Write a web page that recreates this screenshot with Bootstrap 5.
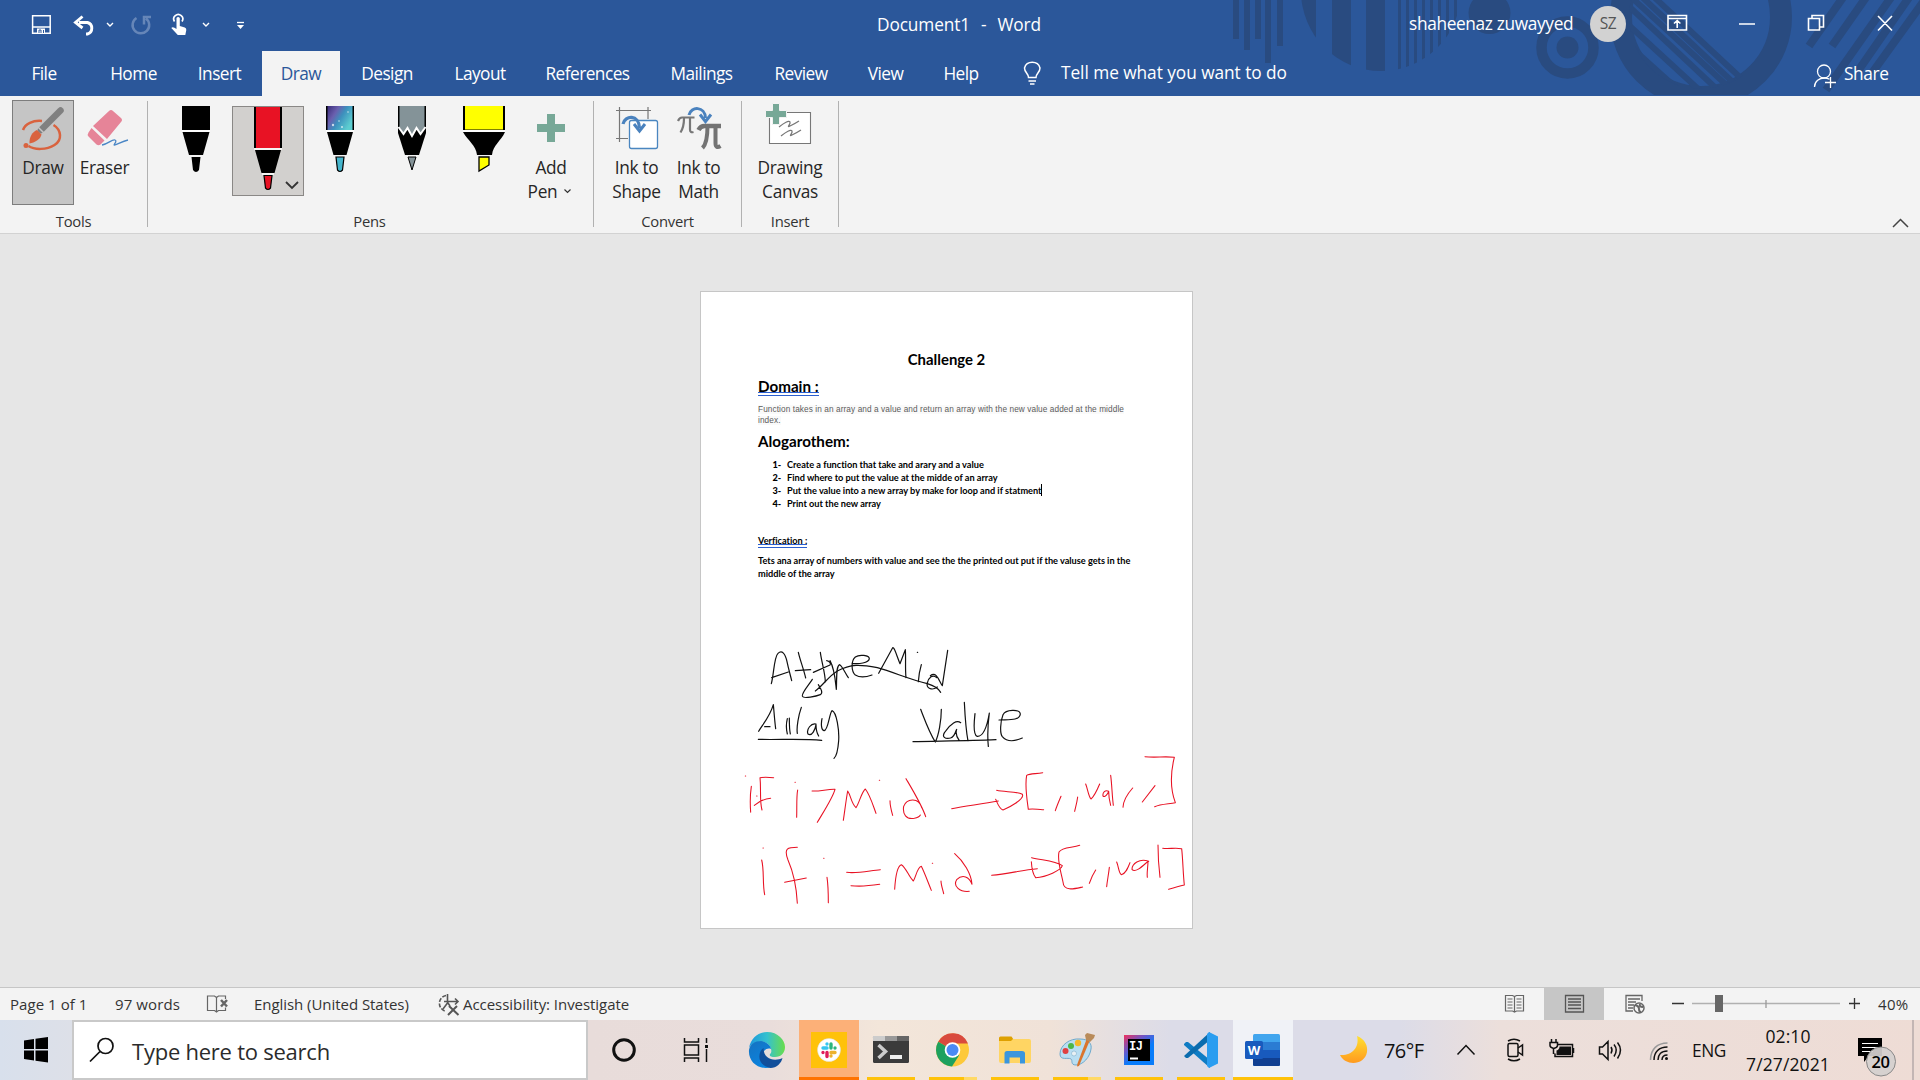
<!DOCTYPE html>
<html lang="en">
<head>
<meta charset="utf-8">
<title>Document1 - Word</title>
<link href="https://cdn.jsdelivr.net/npm/bootstrap@5.3.0/dist/css/bootstrap.min.css" rel="stylesheet">
<style>
body{width:1920px;height:1080px;overflow:hidden;font-family:"Open Sans","Noto Sans",sans-serif;font-size:17.3px;letter-spacing:-.55px;line-height:24px;color:#262626;background:#e6e6e6}
svg{display:block;flex:none;overflow:visible}
.app-head{height:96px;background:#2b579a;color:#fff}
.head-art{left:1220px;top:0}
.title-row{height:48px}
.win-title{white-space:pre;margin-left:617px;width:200px;padding-top:1px;letter-spacing:-.12px;word-spacing:1.1px}
.tab-row{height:45px;margin-top:3px}
.tab-item{flex:none;height:45px;line-height:45px;text-align:center;color:#fff}
.tab-item.on{background:#f3f3f3;color:#2b579a}
.tell-me{line-height:43px;letter-spacing:-.05px}
.avatar{width:36px;height:36px;background:#d2d2d2;color:#555;font-size:15.5px;line-height:35px;text-align:center}
.ribbon{height:138px;background:#f3f3f3;border-bottom:1px solid #d2d2d2}
.rgroup{height:137px;padding-top:4px}
.rbody{height:111px}
.rlabel{font-size:14.8px;line-height:20px;letter-spacing:-.25px;text-align:center;color:#333}
.rsep{width:1px;height:126px;margin-top:5px;background:#b1b1b1}
.tool{height:105px;text-align:center;border:1px solid transparent;letter-spacing:-.3px}
.tool svg{margin-bottom:1px}
.tool.on{background:#c5c5c5;border-color:#7d7d7d}
.pen-cell{width:72px;height:90px;margin-top:6px}
.pen-cell.on{background:#d2d0ce;border:1px solid #8a8886}
.workspace{height:753px;padding-top:57px}
.sheet{width:493px;height:638px;margin-left:700px;background:#fff;border:1px solid #c6c6c6;padding:0 57px;font-family:Lato,sans-serif;color:#000;font-weight:700;letter-spacing:0}
.sheet p,.sheet ol{margin:0;padding:0;white-space:nowrap}
.doc-title{font-size:14.9px;line-height:20px;padding-top:57px!important;height:78px;text-align:center}
.doc-head{font-size:15.2px;line-height:20px}
.dbl{display:inline-block;position:relative}
.dbl::after{content:"";position:absolute;left:0;right:0;top:16px;height:4px;background:#fff;border:solid #2b5fd0;border-width:1px 0}
.doc-body .dbl::after{top:10px}
.doc-quote{font:8.25px/11px "Liberation Sans",sans-serif;letter-spacing:.09px;color:#5c5c5c}
.doc-quote span{background:#fafafa}
.doc-body{font-size:9.2px;line-height:13px;letter-spacing:-.015px}
.doc-body li{list-style:none;display:flex}
.doc-body li b{width:14.5px}
.caret-bar{width:1px;height:12px;background:#000}
.ink{left:29px;top:328px}
.statusbar{height:33px;background:#f3f3f3;border-top:1px solid #c6c6c6;font-size:15px;letter-spacing:-.05px;line-height:32px;color:#333;white-space:nowrap}
.view-btn{width:60px;height:32px}
.view-btn.on{background:#c6c6c6}
.taskbar{height:60px;color:#111;background:linear-gradient(90deg,#d8e0ec 0,#dde0e8 72px,#e8dcda 590px,#e9dddb 770px,#f3e6da 880px,#f0e2d8 1050px,#dcdce8 1170px,#dcdce8 1400px,#ecdfdb 1500px,#eedcd5 100%)}
.searchbox{width:516px;height:60px;background:#fff;border:2px solid #c9c9c9;font-size:22px;letter-spacing:-.24px;color:#2b2b2b}
.app-btn{width:62px;height:60px;position:relative}
.app-btn.run::after{content:"";position:absolute;left:7px;width:48px;bottom:0;height:3px;background:#ffc20a}
.app-btn.two::after{background:linear-gradient(90deg,#ffc20a 35px,#ffd966 35px)}
.app-btn.slack{background:linear-gradient(#fcb078,#fcb078) 1px 0/60px 60px no-repeat}
.app-btn.slack::after{left:1px;width:60px;background:#ff7300}
.app-btn.word{background:linear-gradient(#f0f2f7,#f0f2f7) 1px 0/60px 60px no-repeat}
.app-btn.word::after{left:1px;width:60px}
.temp{width:65px;font-size:20px;letter-spacing:-.6px}
.clock{width:110px;font-size:17.5px;letter-spacing:.1px;line-height:28px;text-align:center}
</style>
<script src="https://cdn.jsdelivr.net/npm/bootstrap@5.3.0/dist/js/bootstrap.bundle.min.js"></script>
</head>
<body class="d-flex flex-column">
<header class="app-head position-relative flex-shrink-0">
  <svg class="head-art position-absolute" width="700" height="95" viewBox="1220 0 700 95" fill="#294b80" style="overflow:hidden">
    <defs><clipPath id="c1"><circle cx="1381" cy="-9" r="80"/></clipPath><clipPath id="c2"><circle cx="1701" cy="17" r="72"/></clipPath></defs>
    <path d="M1233 0h6v39h-6zM1244 0h6v50h-6zM1255 0h6v39h-6zM1265 0h6v63h-6zM1277 0h6v46h-6z"/>
    <path clip-path="url(#c1)" d="M1290 0h26v80h-26zM1332 0h19v80h-19zM1366 0h19v80h-19zM1398 0h3v80h-3zM1406 0h3v80h-3zM1414 0h3v80h-3zM1422 0h3v80h-3zM1430 0h3v80h-3zM1438 0h3v80h-3zM1446 0h3v80h-3zM1454 0h3v80h-3z"/>
    <circle cx="1489.500" cy="13" r="21"/><circle cx="1567.500" cy="47.500" r="26" fill="none" stroke="#294b80" stroke-width="10.500"/><circle cx="1567.500" cy="47.500" r="11"/>
    <circle cx="1701" cy="17" r="80" fill="none" stroke="#294b80" stroke-width="22"/>
    <g clip-path="url(#c2)" fill="none" stroke="#294b80" stroke-width="6"><path d="M1654-3l90 84M1642-3l96 90M1630-4l104 96M1618-4l104 98M1608 6l100 92M1610 28l84 76" /></g>
    <g fill="none" stroke="#294b80" stroke-width="8"><path d="M1844-4l-35 50M1867-4l-35 50M1892-4l-66 94M1910-4l-52 75M1926-2l-54 75"/></g>
  </svg>
  <div class="title-row d-flex align-items-center position-relative">
    <svg width="260" height="48" viewBox="0 0 260 48" fill="none" stroke="#fff" stroke-width="1.500">
      <path d="M32.600 15.800h17.600v17.400h-17.600z"/><path d="M33 27h17"/><path d="M37 33v-4.500h8v4.500" fill="#fff" stroke="none"/><path d="M39 33v-3h2v3M43.500 33v-3" stroke="#2b579a" stroke-width="1"/>
      <path d="M79 22.500h8.500a6 6 0 0 1 0 11.500h-1.500" stroke-width="2.900"/><path d="M82.500 16.500l-7 6 7 5.500" stroke-width="2.900"/>
      <path d="M107 23l3 3 3-3M203 23l3 3 3-3" stroke-width="1.400"/>
      <g stroke="#6686b8" stroke-width="2.500"><path d="M136.500 18a8.300 8.300 0 1 0 9.500 0.500M144 24.500v-7.500h7"/></g>
      <path d="M174.500 21.500a4.500 4.500 0 1 1 7.500 0" stroke-width="1.700"/><path d="M176.500 18q1.500-2 3.300 0v8l5 1.500q1.700.6 1.500 2.500l-1 5h-7.500l-6.500-7q1.500-2 5.200 1z" fill="#fff" stroke="none"/>
      <path d="M237 22.500h7" stroke-width="1.300"/><path d="M237 25h7l-3.500 4z" fill="#fff" stroke="none"/>
    </svg>
    <div class="win-title">Document1  -  Word</div>
    <div style="margin-left:332px;width:181px;letter-spacing:-.35px">shaheenaz zuwayyed</div>
    <div class="avatar rounded-circle">SZ</div>
    <svg width="294" height="48" viewBox="1626 0 294 48" fill="none" stroke="#fff" stroke-width="1.600">
      <path d="M1668 15.500h18.500v14.500h-18.500zM1668 18.500h18.500M1677.200 28v-7M1674 23.500l3.200-3 3.200 3M1739 24h16M1808.500 18.500h11v11.500h-11zM1812 18v-2.500h11.500v11.500h-3.500M1878 16l14 14.500M1892 16l-14 14.500"/>
    </svg>
  </div>
  <nav class="tab-row d-flex position-relative">
    <div class="tab-item" style="width:88px">File</div><div class="tab-item" style="width:91px">Home</div><div class="tab-item" style="width:81px">Insert</div><div class="tab-item on" style="width:78px;margin-left:2px">Draw</div><div class="tab-item" style="width:94px">Design</div><div class="tab-item" style="width:92px">Layout</div><div class="tab-item" style="width:123px">References</div><div class="tab-item" style="width:105px">Mailings</div><div class="tab-item" style="width:94px">Review</div><div class="tab-item" style="width:75px">View</div><div class="tab-item" style="width:76px">Help</div>
    <svg width="62" height="45" viewBox="999 51 62 45" fill="none" stroke="#fff" stroke-width="1.500"><path d="M1028.500 77.500c0-4-4-5-4-9.500a8 7.500 0 0 1 15.500 0c0 4.500-4 5.500-4 9.500zM1028.500 81h7.500M1030 84h4.500"/></svg>
    <div class="tab-item tell-me text-start" style="width:752px">Tell me what you want to do</div>
    <svg width="31" height="45" viewBox="1813 51 31 45" fill="none" stroke="#fff" stroke-width="1.300"><circle cx="1824" cy="71.500" r="6.500"/><path d="M1814.500 87c0-6 5-9 10-9 2 0 3.500.5 5 1.300M1825 82.500h11M1830.500 77v11"/></svg>
    <div class="tab-item" style="letter-spacing:-.4px">Share</div>
  </nav>
</header>

<section class="ribbon d-flex flex-shrink-0">
  <div class="rgroup" style="width:147px">
    <div class="rbody d-flex ps-2">
      <div class="tool on" style="width:62px;margin-left:4px">
        <svg width="60" height="54" viewBox="13 101 60 54" fill="none"><path d="M23 130c2-6 10-10 19-9M53.500 125c8 5 9 15 1 20-8 5-20 5-26 1" stroke="#d9633f" stroke-width="2.500"/><path d="M60.500 110.500L41 130" stroke="#808080" stroke-width="6.500" stroke-linecap="round"/><path d="M37 130l4.500 4.500c-1 5-7 8-12 9-.5-6 3-12 7.500-13.500z" fill="#d9633f"/><path d="M38 127l6.500 6.500" stroke="#c5c5c5" stroke-width="1.500"/><circle cx="26" cy="145.500" r="2.500" fill="#d9633f"/></svg>
        Draw</div>
      <div class="tool" style="width:61px">
        <svg width="59" height="54" viewBox="75 101 59 54"><path d="M109 111q2-2 4 0l8 7q2 2 0 4l-14 17-14-13z" fill="#e68498"/><path d="M91.500 128l13 12.500-4 4q-2 1.500-4 0l-8-8q-1.500-2 0-4z" fill="#e68498"/><path d="M102 145c6-1 10-6 13-5s-3 6 0 5 8-4 13-5" fill="none" stroke="#4a86c5" stroke-width="1.300"/></svg>
        Eraser</div>
    </div>
    <div class="rlabel">Tools</div>
  </div>
  <div class="rsep"></div>
  <div class="rgroup" style="width:445px">
    <div class="rbody d-flex" style="padding-left:12px">
      <div class="pen-cell"><svg width="72" height="90" viewBox="160 106 72 90"><path d="M182 106h28v24h-28zM182.500 132h27l-6.500 23h-14zM191.500 157h9l-1.500 13q-3 4-6 0z"/><path d="M182 131h28" stroke="#fff" stroke-width="1.500"/></svg></div>
      <div class="pen-cell on"><svg width="70" height="88" viewBox="233 107 70 88"><path d="M254 107h28v41h-28zM255 150h26l-6.500 23h-13z"/><path d="M256 107h24v41h-24z" fill="#e81224"/><path d="M254 149h28M262 174h12" stroke="#fff" stroke-width="1.500"/><path d="M264 175.500h8l-1.500 12.500q-2.500 3-5 0z" fill="#e81224" stroke="#000" stroke-width="1.200"/><path d="M286 182l6 6 6-6" fill="none" stroke="#333" stroke-width="1.800"/></svg></div>
      <div class="pen-cell"><svg width="72" height="90" viewBox="304 106 72 90"><defs><linearGradient id="gal" x2="1" y2=".6"><stop stop-color="#3a2b78"/><stop offset=".35" stop-color="#6a5fae"/><stop offset=".6" stop-color="#3d90bd"/><stop offset="1" stop-color="#5ccdd0"/></linearGradient></defs><path d="M326 106h28v24h-28zM327 132h26l-6.500 23h-13z"/><path d="M327.500 106h25v24h-25z" fill="url(#gal)"/><path d="M326 131h28" stroke="#fff" stroke-width="1.500"/><g fill="#fff" opacity=".7"><circle cx="333" cy="125" r="1.200"/><circle cx="339" cy="121" r=".8"/><circle cx="342" cy="127" r="1"/><circle cx="348" cy="112" r=".8"/></g><path d="M336 157h8l-1.500 13q-2.500 3-5 0z" fill="#45b5cc" stroke="#000" stroke-width="1.200"/></svg></div>
      <div class="pen-cell"><svg width="72" height="90" viewBox="376 106 72 90"><path d="M398 106h28v27l-7 22h-14l-7-22z"/><path d="M399.500 106h25v21l-3.500 6-5-5-4 7-4-7-5 5-3.500-6z" fill="#849398"/><path d="M398.500 127l5 7 4-6 4.500 8 4.500-8 4 6 5-7" fill="none" stroke="#fff" stroke-width="2"/><path d="M408 157h8l-4 13z" fill="#849398" stroke="#000"/></svg></div>
      <div class="pen-cell"><svg width="72" height="90" viewBox="448 106 72 90"><path d="M463 106h42v24h-42zM463 132h42c-4 9-12 13-13 23h-15c-1-10-9-14-14-23z"/><path d="M465 106h38v23.500h-38z" fill="#ff0"/><path d="M463 131h42" stroke="#fff" stroke-width="1.500"/><path d="M479 157h10v8l-10 6z" fill="#ff0" stroke="#000" stroke-width="1.300"/></svg></div>
      <div class="tool" style="width:62px"><svg width="60" height="54" viewBox="521 101 60 54"><path d="M547 114h8v10h10v8h-10v10h-8v-10h-10v-8h10z" fill="#77a897"/></svg>Add<div class="d-flex justify-content-center align-items-center" style="gap:7px;margin-left:-3px">Pen<svg width="7" height="5" fill="none" stroke="#333" stroke-width="1.200"><path d="M.5.5l3 3 3-3"/></svg></div></div>
    </div>
    <div class="rlabel" style="width:443px">Pens</div>
  </div>
  <div class="rsep"></div>
  <div class="rgroup" style="width:147px">
    <div class="rbody d-flex" style="padding-left:11px">
      <div class="tool" style="width:63px"><svg width="61" height="54" viewBox="606 101 61 54" fill="none"><path d="M616 110.500h35M619.500 107v35M616 138.500h12M648 107v12" stroke="#777" stroke-width="1.200"/><rect x="629.500" y="120.500" width="28" height="28" rx="2" fill="#fff" stroke="#4a86c0" stroke-width="1.300"/><path d="M623 124c2-9 16-10 16.500 4" stroke="#4a82be" stroke-width="3.200"/><path d="M634 124l5.500 7 5.500-7" stroke="#4a82be" stroke-width="3"/></svg>Ink to<br>Shape</div>
      <div class="tool" style="width:61px"><svg width="59" height="54" viewBox="669 101 59 54" fill="none"><path d="M678 121q1.500-3.500 4-3.500h12.500M684 118.500c0 6-1 10-3.500 14M690 118.500v11q0 3.500 3.500 2.500" stroke="#777" stroke-width="2.200"/><path d="M698.500 130q2-4 6-4h16.500" stroke="#737373" stroke-width="4.500"/><path d="M707.500 126c0 10-1 18-5 22M715.500 126v17q0 6 5 3" stroke="#737373" stroke-width="4"/><path d="M689 115c2-9 16-9 16.500 3" stroke="#4a82be" stroke-width="3"/><path d="M700 114.500l5.500 7 5.500-7" stroke="#4a82be" stroke-width="3"/></svg>Ink to<br>Math</div>
    </div>
    <div class="rlabel">Convert</div>
  </div>
  <div class="rsep"></div>
  <div class="rgroup" style="width:96px">
    <div class="rbody"><div class="tool"><svg width="94" height="54" viewBox="743 101 94 54" fill="none"><path d="M769.500 112.500h41v31h-41z" fill="#fff" stroke="#777" stroke-width="1.100"/><path d="M779 127c5-4 10-7 11-5s-4 6 0 4 6-3 9-5M781 136c5-4 10-7 11-5s-4 6 0 4 6-3 9-5" stroke="#777" stroke-width="1.300"/><path d="M772.500 103.500h7v7h7v7h-7v7h-7v-7h-7v-7h7z" fill="#77a897" stroke="#f3f3f3"/></svg>Drawing<br>Canvas</div></div>
    <div class="rlabel">Insert</div>
  </div>
  <div class="rsep"></div>
  <svg class="ms-auto align-self-end" width="30" height="20" viewBox="1890 213 30 20" fill="none" stroke="#444" stroke-width="1.500"><path d="M1893 227l7.500-7.500 7.500 7.500"/></svg>
</section>

<main class="workspace flex-shrink-0">
  <article class="sheet position-relative">
    <p class="doc-title">Challenge 2</p>
    <p class="doc-head" style="padding-top:6px;height:34px"><span class="dbl">Domain :</span></p>
    <p class="doc-quote"><span>Function takes in an array and a value and return an array with the new value added at the middle</span><br><span>index.</span></p>
    <p class="doc-head" style="padding-top:5px;height:32px">Alogarothem:</p>
    <ol class="doc-body" style="padding-left:14.500px">
      <li><b>1-</b>Create a function that take and arary and a value</li>
      <li><b>2-</b>Find where to put the value at the midde of an array</li>
      <li><b>3-</b>Put the value into a new array by make for loop and if statment<i class="caret-bar"></i></li>
      <li><b>4-</b>Print out the new array</li>
    </ol>
    <p class="doc-body" style="padding-top:24px;height:44px"><span class="dbl">Verfication :</span></p>
    <p class="doc-body">Tets ana array of numbers with value and see the the printed out put if the valuse gets in the<br>middle of the array</p>
    <svg class="ink position-absolute" width="470" height="320" viewBox="0 0 1410 960" fill="none" stroke-linecap="round" stroke-linejoin="round" stroke-width="3.600">
      <g stroke="#111">
        <path d="M124 191c8-30 8-80 20-91s22 1 27 25 10 40 14 57M125 173l50-17"/>
        <path d="M205 97c6 26 16 50 22 77M196 152l46-3M271 97c4 30 14 60 15 88M250 157l50-22c4-4-2-12-10-13M300 122c14 25 16 60 19 86 2-30-2-70 10-74 8 4 18 28 26 39M366 130c20 2 50 0 52-14 0-10-30-14-42-5-14 12-12 44 0 54 14 9 34 6 50 0"/>
        <path d="M446 160l42-77c5-3 14 30 22 48l16-42c2 30-1 56 2 84M562 97h1M574 134c-5 17-8 34-9 51"/>
        <path d="M620 173c-12-12-24 0-28 16s14 24 30 12M653 91l-16 106c-8-8-16-46-36-30"/>
        <path d="M632 217c-8-14-20-20-40-26-50-12-100-34-150-48-50-10-80-12-120 10-24 14-44 44-66 60M247 178c-10 16-32 40-30 50s44 0 54-4c10-6 0-20-6-30"/>
        <path d="M86 334c10-18 34-44 44-80 2 20 4 50 7 72M104 320h16M172 296c-4 16-4 30 0 46M178 294c0 14 0 34 3 48M214 262c-8 22-15 60-12 78M258 312c-14-4-30 16-24 30 12 8 22-14 24-28 0 12 2 24 8 34M276 296c-3 14-3 34 6 36 12 2 16-52 24-60 14 4 22 60 20 90-2 26-6 46-14 53M85 358c60 2 130-3 190 3"/>
        <path d="M572 268c14 36 26 70 44 98 10-20 18-64 18-98M692 308c-12-10-30 4-44 24-18 20 0 26 14 22 14-4 16-26 18-26-4 12 2 26 8 34M703 247c2 40 4 80 11 116M735 281c-2 20-8 60 6 68 22 2 32-40 37-70-4 30-6 70-3 100M807 300c24-2 62 4 64-18-2-16-44-14-52 2-8 20-10 56-2 66 14 16 38 14 60 4M549 365c60-2 160-2 249-6"/>
      </g>
      <g stroke="#e81224" stroke-width="3.200">
        <path d="M46 468h1M64 499c-4 26-4 50-2 78M96 570c-8-30-2-60-6-97 12-2 28-1 41 0M73 556c12-10 32-20 49-21M80 528h1M195 487h1M203 510c-4 20-2 52-3 82M246 513c20 2 48-6 69-5-6 24-36 70-53 99M340 601c4-26 8-60 13-88 10 14 10 36 25 50 10-14 16-46 28-56 14 18 22 46 32 73M448 481h1M480 542c0 12 4 30 8 44M528 476c20 34 48 80 59 114M575 563c-8-30-44-30-54-4-4 24 8 40 32 36 10-2 16-6 18-10M665 566c44-8 90-14 140-23M800 511c24 6 60 2 77 12 8 14-40 40-58 47-12-4-16-20-22-32M938 458c-20 4-38 2-48 8-6 30 0 66 5 102 16-4 30 2 46 1M993 529c-6 14-12 28-17 43M1043 531c-2 16-6 30-9 43M1067 492c6 14 8 36 16 45 10-8 18-26 26-45M1136 514c-10-6-19 4-17 14 6 6 14-6 17-14 0 14 2 28 6 42M1142 466c4 30 4 60 8 90M1208 504c-16 18-28 34-29 58M1275 497l-38 49M1245 410c30 4 60-2 88 2-10 40-14 90 3 136-20 4-44 4-62 12"/>
        <path d="M99 684h1M95 720c8 30 2 70 9 104M202 682c-28 0-42 2-28 38 22 50 26 90 28 130M164 787l65-13M281 715h1M291 772c4 26 4 50 4 76M350 757c34 4 68-5 101-8M363 797c30 4 60 0 86-4M494 808c2-34 8-70 20-74 14 8 22 36 36 49 8-12 12-42 24-44 10 20 20 48 30 72M607 730h1M633 783c0 12 6 28 8 38M674 701c26 22 50 60 52 92-8-22-28-32-46-14-12 20 10 38 38 35M785 766c50-4 90-16 137-20M905 713c30 8 70 8 92 24-4 14-48 34-80 36-8-10-12-32-13-48M1049 676c-22 8-52 4-62 20-6 26 6 60 12 90 2 30 36 20 59 15M1097 750c-8 12-14 26-19 40M1138 742c-2 20-6 38-8 58M1160 726c6 14 6 32 14 38 14-4 20-20 26-36M1256 724c-28-10-50 8-50 24 10 14 38-16 48-24 0 16-4 34-2 48M1284 675c0 34 2 64 6 97M1298 685c20 2 38-2 57 1 4 36 4 74 8 109-16 4-30 8-47 13"/>
      </g>
    </svg>
  </article>
</main>

<footer class="statusbar d-flex flex-shrink-0">
  <div style="width:105px;padding-left:10px;letter-spacing:.05px">Page 1 of 1</div><div style="width:92px;padding-left:10px;letter-spacing:.1px">97 words</div>
  <svg width="57" height="32" viewBox="197 988 57 32" fill="none" stroke="#666" stroke-width="1.200"><path d="M216.500 997.500l-2-1.500h-7v14.500h7l2 1.500 2-1.500h7v-3M216.500 997v15M216.500 997.500l2-1.500h7v3"/><path d="M221 1000l6 6.500M227 1000l-6 6.500" stroke-width="2.500"/></svg>
  <div style="width:183px">English (United States)</div>
  <svg width="26" height="32" viewBox="437 988 26 32" fill="none" stroke="#555" stroke-width="1.600"><path d="M446 995.500a8 8 0 0 0-1 15.500" stroke-dasharray="4 1.500"/><path d="M447.500 994v9l-4.500 6M444 1001.500h14M455 998.500l3 3-3 3M448 1003l2 3"/><path d="M449 1006l9.500 9M457 1006l-9 9" stroke-width="2"/></svg>
  <div>Accessibility: Investigate</div>
  <div class="ms-auto d-flex" style="width:436px">
    <div class="view-btn"><svg width="60" height="32" viewBox="1484 988 60 32" fill="none" stroke="#666" stroke-width="1.200"><path d="M1514.500 996.500l-2-1h-7v15.500h7l2 1 2-1h7v-15.500h-7zM1514.500 996v16M1507.500 999h5M1507.500 1002h5M1507.500 1005h5M1507.500 1008h5M1516.500 999h5M1516.500 1002h5M1516.500 1005h5M1516.500 1008h5"/></svg></div>
    <div class="view-btn on"><svg width="60" height="32" viewBox="1544 988 60 32" fill="none" stroke="#555" stroke-width="1.300"><path d="M1565.500 995.500h18v16.500h-18zM1568 999h13M1568 1002h13M1568 1005h13M1568 1008.500h13"/></svg></div>
    <svg width="274" height="32" viewBox="1604 988 274 32" fill="none" stroke="#666" stroke-width="1.300"><path d="M1642 1001v-5.500h-16v15.500h7M1628 999h12M1628 1002h8M1628 1005h6M1628 1008h5"/><circle cx="1639" cy="1008" r="5" stroke-width="1.500"/><path d="M1635 1005q4 1 4 4t2 3M1640 1004q-1 3 3 3" stroke-width="2"/><path d="M1672 1003.500h12M1849 1003.500h11M1854.500 998v11" stroke="#333"/><path d="M1692 1003.500h148" stroke="#b0b0b0" stroke-width="1.600"/><path d="M1766 1000v8" stroke="#999"/><path d="M1715 995h8v17h-8z" fill="#666" stroke="none"/></svg>
    <div style="letter-spacing:.3px">40%</div>
  </div>
</footer>

<div class="taskbar d-flex align-items-center flex-shrink-0">
  <svg width="72" height="60" viewBox="0 1020 72 60"><path d="M24 1040.500l10-1.500v10h-10zM35.500 1038.700l12.500-1.700v12h-12.500zM24 1050.500h10v10l-10-1.500zM35.500 1050.500h12.500v12l-12.500-1.700z"/></svg>
  <div class="searchbox d-flex align-items-center"><svg width="58" height="56" viewBox="74 1022 58 56" fill="none" stroke="#111" stroke-width="1.700"><circle cx="105.500" cy="1046" r="7.500"/><path d="M100 1051.500l-10 10"/></svg><span style="padding-top:2px">Type here to search</span></div>
  <svg width="148" height="60" viewBox="588 1020 148 60" fill="none" stroke="#111" stroke-width="1.500"><circle cx="624" cy="1050" r="10.300" stroke-width="3"/><path d="M684.500 1038v4h14v-4M684.500 1062v-4h14v4M684.500 1045h14v10h-14zM706.500 1038v5M706.500 1049v13"/><path d="M705 1045h3v3h-3z" fill="#111" stroke="none"/></svg>
  <div class="app-btn"><svg width="62" height="60" viewBox="-13 -12 62 60"><defs><linearGradient id="e1"><stop stop-color="#1d96dc"/><stop offset=".5" stop-color="#35c1cf"/><stop offset="1" stop-color="#69dd4b"/></linearGradient><linearGradient id="e2" y2="1" x2=".6"><stop stop-color="#1672c0"/><stop offset="1" stop-color="#0a84e0"/></linearGradient></defs><path d="M0 16C2 6 9 0 18 0c11 0 18 8 18 15 0 6-4 10-10 10-4 0-6-1-5-3 3-2 1-10-6-12C8 9 2 12 0 16z" fill="url(#e1)"/><path d="M0 18c1-6 6-9 12-9 6 1 10 5 10 8-5-2-9 3-8 8 1 6 5 10 9 10C10 39-1 30 0 18z" fill="url(#e2)"/><path d="M14.500 16c-6 4-7 17 7 20 6 0 11-5 12-10-6 3-19 3-19-10z" fill="#124f9b"/></svg></div>
  <div class="app-btn run slack"><svg width="62" height="60" viewBox="798 1020 62 60" stroke-width="3.400" stroke-linecap="round"><path d="M811 1032h36v36h-36z" fill="#ffc20a"/><circle cx="829" cy="1050" r="11.500" fill="#fff" stroke="#ddd" stroke-width=".5"/><path d="M823 1048h4M827 1044v0" stroke="#36c5f0"/><path d="M831 1044v4M835 1048v0" stroke="#2eb67d"/><path d="M831 1052.500h4M831 1056v0" stroke="#ecb22e"/><path d="M827 1052.500v4M823 1052.500v0" stroke="#e01e5a"/></svg></div>
  <div class="app-btn run"><svg width="62" height="60" viewBox="860 1020 62 60"><rect x="873" y="1036" width="36" height="27" rx="1.500" fill="#3b3b3b"/><path d="M873 1036h12v5h-12z" fill="#ccc"/><path d="M885 1036h12v5h-12z" fill="#999"/><path d="M897 1036h12v5h-12z" fill="#666"/><path d="M878.500 1045l7 6.500-7 6.500" fill="none" stroke="#ccc" stroke-width="3.500"/><path d="M890 1055h12v4h-12z" fill="#eee"/></svg></div>
  <div class="app-btn run two"><svg width="62" height="60" viewBox="922 1020 62 60"><circle cx="952.500" cy="1050" r="16.500" fill="#fdc93a"/><path d="M952.500 1050L938.200 1041.800A16.500 16.500 0 0 1 968 1043.500h-15.500z" fill="#d94a3e"/><path d="M952.500 1050l-14.300-8.200A16.500 16.500 0 0 0 952 1066.500l7-11z" fill="#1da15f"/><circle cx="952.500" cy="1050" r="7.800" fill="#fff"/><circle cx="952.500" cy="1050" r="6" fill="#4a8af4"/></svg></div>
  <div class="app-btn run"><svg width="62" height="60" viewBox="984 1020 62 60"><path d="M999 1038q0-1.500 1.500-1.500h11l2 3-2 3h-12.500z" fill="#dea000"/><path d="M999 1041h12l2-2h16q2 0 2 2v20q0 2-2 2h-28q-2 0-2-2z" fill="#ffd563"/><path d="M1004.500 1063.500v-10q0-2.500 2.500-2.500h15q3 0 3 2.500v10h-5v-6h-10.500v6z" fill="#3a96dd"/></svg></div>
  <div class="app-btn run two"><svg width="62" height="60" viewBox="1046 1020 62 60"><path d="M1060 1054c0-9 10-16 20-15 9 0 12 5 11 10-1 8-8 16-15 16-6 0-3-5-5-6-3-2-11 2-11-5z" fill="#b9def2" stroke="#6fa9cc"/><circle cx="1065.500" cy="1051" r="3" fill="#e04040"/><circle cx="1071" cy="1046" r="3" fill="#4cb648"/><circle cx="1078" cy="1043" r="3.200" fill="#f5b82c"/><circle cx="1074" cy="1053.500" r="2.500" fill="#e8f0f4" stroke="#7fb0cc" stroke-width=".6"/><path d="M1090 1040l-11 26-2 .5.500-3 9-24z" fill="#d9752e"/><path d="M1086 1040l-1-5 2-2 8 2-1 3-4 4z" fill="#b98b5a"/></svg></div>
  <div class="app-btn run"><svg width="62" height="60" viewBox="1108 1020 62 60"><defs><linearGradient id="ij" x2=".8" y2="1"><stop stop-color="#f0305c"/><stop offset=".35" stop-color="#6b57c9"/><stop offset=".65" stop-color="#087cfa"/></linearGradient></defs><path d="M1124 1035h30v30h-30z" fill="url(#ij)"/><path d="M1128 1039h22v22h-22z"/><path d="M1130 1057.500h8v2h-8z" fill="#fff"/><text x="1129" y="1050" fill="#fff" font-family="Liberation Mono" font-weight="700" font-size="12" letter-spacing="-.5">IJ</text></svg></div>
  <div class="app-btn run"><svg width="62" height="60" viewBox="1170 1020 62 60"><path d="M1184 1044l2-2h2l22 18v8l-26-23z" fill="#0f7cc4"/><path d="M1184 1056l26-24v8l-22 18h-2z" fill="#0b6cae"/><path d="M1209 1032l9 4.500v27l-9 4.500-2-2v-32z" fill="#2a9df0"/></svg></div>
  <div class="app-btn run word"><svg width="62" height="60" viewBox="1232 1020 62 60"><rect x="1253" y="1034" width="27" height="32" rx="1.500" fill="#41a5ee"/><path d="M1253 1042h27v8h-27z" fill="#2b7cd3"/><path d="M1253 1050h27v8h-27z" fill="#185abd"/><path d="M1253 1058h27v6.500q0 1.500-1.500 1.500h-24q-1.500 0-1.500-1.500z" fill="#103f91"/><rect x="1245" y="1041" width="18" height="18" rx="1.500" fill="#185abd"/><text x="1254" y="1055" text-anchor="middle" fill="#fff" font-size="13" font-weight="700" letter-spacing="0">W</text></svg></div>
  <svg width="90" height="60" viewBox="1294 1020 90 60"><defs><linearGradient id="mn" x2="0" y2="1"><stop stop-color="#ffe030"/><stop offset="1" stop-color="#ff9a1f"/></linearGradient></defs><path d="M1357 1036c8 3 11 10 10 16-2 13-21 15-27 3 11 1 20-7 17-19z" fill="url(#mn)"/></svg>
  <div class="temp" style="padding-top:2px">76°F</div>
  <svg width="243" height="60" viewBox="1449 1020 243 60" fill="none" stroke="#111" stroke-width="1.500"><path d="M1457.500 1054.500l8.500-9 8.500 9"/><rect x="1508" y="1043.500" width="10" height="13" rx="1.500"/><path d="M1518 1048l4.500-3v10l-4.500-3M1508 1041q6-3.500 12 0M1508 1059q6 3.500 12 0"/><path d="M1558 1044.500h14.500v12h-17.500v-3M1573.500 1048v5M1551.500 1039v3.500M1556 1039v3.500M1550 1042.500h7.500v3q0 2-3.700 3-3.800-1-3.800-3zM1553.500 1048v6"/><path d="M1559.500 1046.500h11.500v8.500h-14.500v-4.500q3-1 3-4z" fill="#111" stroke="none"/><path d="M1599.500 1047h3l5.500-5.500v18l-5.500-5.500h-3zM1611 1047q2 3 0 6.500M1614 1044.500q4.500 5.500 0 12M1617.500 1042.500q6 7.500 0 16"/><path d="M1650.500 1060c0-11 7-17 17-17" stroke="#999"/><path d="M1654 1060c0-8 5-13 13.500-13M1658 1060c0-5 3-9 9.500-9M1662 1060c0-3 2-5 5.500-5"/><circle cx="1666.500" cy="1058.500" r="1.500" fill="#111" stroke="none"/></svg>
  <div style="width:41px;padding-top:2px;letter-spacing:-.4px">ENG</div>
  <div class="clock">02:10<br>7/27/2021</div>
  <svg width="77" height="60" viewBox="1843 1020 77 60"><path d="M1858 1038h24v18h-13l-5 6v-6h-6z"/><path d="M1862 1043.500h16M1862 1047.500h16M1862 1051.500h11" stroke="#fff" stroke-width="1.200"/><circle cx="1881" cy="1061.500" r="14.500" fill="#d4d0cf" fill-opacity=".93" stroke="#888"/><text x="1880.500" y="1067.500" text-anchor="middle" font-size="16.500" font-weight="600">20</text><path d="M1913 1020v60" stroke="#b5aaa8" stroke-width="1.500"/></svg>
</div>
</body>
</html>
